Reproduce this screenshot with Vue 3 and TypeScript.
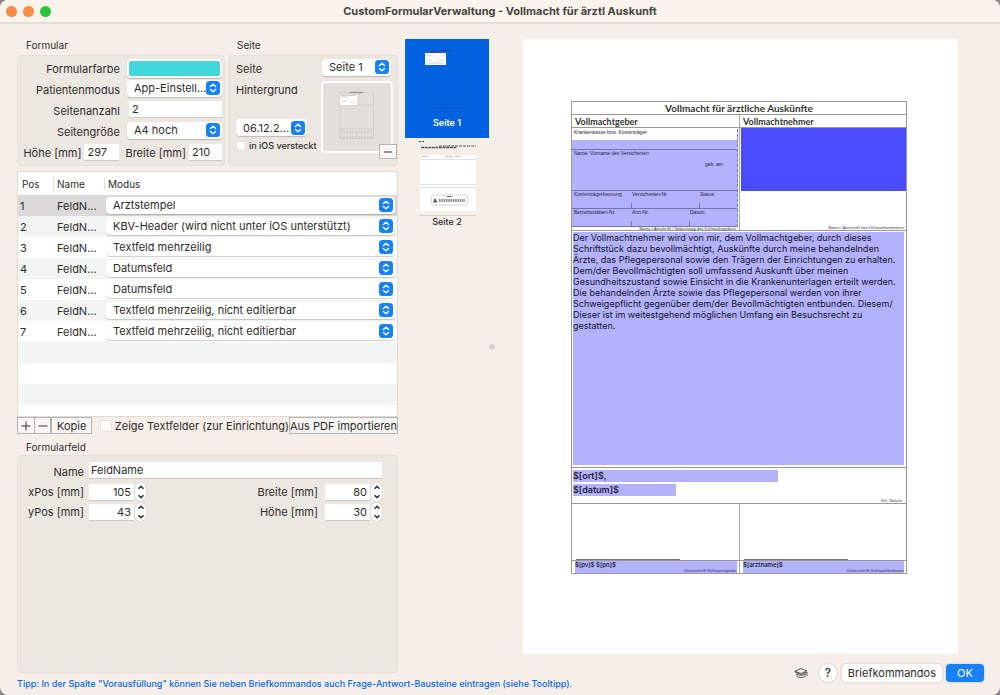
<script setup lang="ts">
import { ref } from 'vue'

interface FormField {
  pos: number
  name: string
  mode: string
}

const modes = [
  'Arztstempel',
  'KBV-Header (wird nicht unter iOS unterstützt)',
  'Textfeld mehrzeilig',
  'Datumsfeld',
  'Textfeld mehrzeilig, nicht editierbar',
]

const fields = ref<FormField[]>(
  [0, 1, 2, 3, 3, 4, 4].map((mode, i) => ({ pos: i + 1, name: 'FeldN...', mode: modes[mode] })),
)
const selected = ref(1)

const patientMode = ref('App-Einstell...')
const pageCount = ref('2')
const pageSize = ref('A4 hoch')
const paperHeight = ref('297')
const paperWidth = ref('210')
const page = ref('Seite 1')
const background = ref('06.12.2...')
const hiddenInIos = ref(false)
const showTextFields = ref(false)

const fieldName = ref('FeldName')
const metrics = ref([
  { id: 'x', label: 'xPos [mm]', value: 105 },
  { id: 'w', label: 'Breite [mm]', value: 80 },
  { id: 'y', label: 'yPos [mm]', value: 43 },
  { id: 'h', label: 'Höhe [mm]', value: 30 },
])

const consentLines = [
  'Der Vollmachtnehmer wird von mir, dem Vollmachtgeber, durch dieses',
  'Schriftstück dazu bevollmächtigt, Auskünfte durch meine behandelnden',
  'Ärzte, das Pflegepersonal sowie den Trägern der Einrichtungen zu erhalten.',
  'Dem/der Bevollmächtigten soll umfassend Auskunft über meinen',
  'Gesundheitszustand sowie Einsicht in die Krankenunterlagen erteilt werden.',
  'Die behandelnden Ärzte sowie das Pflegepersonal werden von ihrer',
  'Schweigepflicht gegenüber dem/der Bevollmächtigten entbunden. Diesem/',
  'Dieser ist im weitestgehend möglichen Umfang ein Besuchsrecht zu',
  'gestatten.',
]
</script>

<template>
  <div class="window">
    <svg class="sprite" aria-hidden="true">
      <symbol id="updown" viewBox="0 0 14 14">
        <rect width="14" height="14" rx="3.5" fill="#1780fb" />
        <path d="M4.4 5.6 7 3.2l2.6 2.4M4.4 8.4 7 10.8l2.6-2.4" fill="none" stroke="#fff" stroke-width="1.3" stroke-linecap="round" stroke-linejoin="round" />
      </symbol>
    </svg>

    <header class="titlebar">
      <div class="lights"><i class="light"></i><i class="light"></i><i class="light zoom"></i></div>
      <h1>CustomFormularVerwaltung - Vollmacht für ärztl Auskunft</h1>
    </header>

    <main class="content">
      <section class="editor">
        <div class="groups">
          <section class="group formular">
            <h2>Formular</h2>
            <div class="box">
              <div class="row">
                <label for="colour">Formularfarbe</label>
                <button id="colour" class="well" type="button" aria-label="Formularfarbe"></button>
              </div>
              <div class="row">
                <label for="pmode">Patientenmodus</label>
                <span class="select">
                  <select id="pmode" v-model="patientMode"><option>App-Einstell...</option></select>
                  <svg><use href="#updown" /></svg>
                </span>
              </div>
              <div class="row">
                <label for="count">Seitenanzahl</label>
                <input id="count" v-model="pageCount" class="text" type="text" />
              </div>
              <div class="row">
                <label for="size">Seitengröße</label>
                <span class="select">
                  <select id="size" v-model="pageSize"><option>A4 hoch</option></select>
                  <svg><use href="#updown" /></svg>
                </span>
              </div>
              <div class="row dims">
                <label for="ph">Höhe [mm]</label>
                <input id="ph" v-model="paperHeight" class="text" type="text" />
                <label for="pw">Breite [mm]</label>
                <input id="pw" v-model="paperWidth" class="text" type="text" />
              </div>
            </div>
          </section>

          <section class="group seite">
            <h2>Seite</h2>
            <div class="box">
              <div class="seite-top">
                <label for="page">Seite</label>
                <span class="select">
                  <select id="page" v-model="page"><option>Seite 1</option><option>Seite 2</option></select>
                  <svg><use href="#updown" /></svg>
                </span>
              </div>
              <div class="seite-main">
                <div class="seite-left">
                  <label for="bg">Hintergrund</label>
                  <span class="select">
                    <select id="bg" v-model="background"><option>06.12.2...</option></select>
                    <svg><use href="#updown" /></svg>
                  </span>
                  <label class="check small"><input v-model="hiddenInIos" type="checkbox" />in iOS versteckt</label>
                </div>
                <div class="preview">
                  <svg viewBox="0 0 68 68" fill="none" aria-hidden="true">
                    <g stroke="#c2beba" stroke-width=".7" stroke-dasharray="2 1">
                      <path d="M17 9.500H50.500V55.500H17zM17 22H50.500M17 46H50.500M17 49H50.500M17 54H50.500M34 49v6" />
                    </g>
                    <path d="M27 9.500h13" stroke="#9c9996" stroke-width="1.500" />
                    <path d="M17 12h17v10H17z" fill="#fff" />
                    <path d="M18 14h8M19 18h5M27 19h5M18 12.500h15" stroke="#bbb" stroke-width=".7" />
                  </svg>
                  <button class="square minus" type="button" aria-label="Hintergrund entfernen"><svg viewBox="0 0 10 10"><path d="M1 5h8" /></svg></button>
                </div>
              </div>
            </div>
          </section>
        </div>

        <div class="tablewrap">
          <table>
            <thead>
              <tr><th class="c-pos">Pos</th><th class="c-name">Name</th><th>Modus</th></tr>
            </thead>
            <tbody>
              <tr v-for="f in fields" :key="f.pos" :class="{ selected: f.pos === selected }" @click="selected = f.pos">
                <td>{{ f.pos }}</td>
                <td>{{ f.name }}</td>
                <td class="c-mode">
                  <span class="select">
                    <select v-model="f.mode" :aria-label="`Modus ${f.pos}`">
                      <option v-for="m in modes" :key="m">{{ m }}</option>
                    </select>
                    <svg><use href="#updown" /></svg>
                  </span>
                </td>
              </tr>
            </tbody>
          </table>
        </div>

        <div class="toolbar">
          <button class="square" type="button" aria-label="Hinzufügen"><svg viewBox="0 0 10 10"><path d="M.5 5h9M5 .5v9" /></svg></button>
          <button class="square" type="button" aria-label="Entfernen"><svg viewBox="0 0 10 10"><path d="M.5 5h9" /></svg></button>
          <button class="square wide" type="button">Kopie</button>
          <label class="check"><input v-model="showTextFields" type="checkbox" />Zeige Textfelder (zur Einrichtung)</label>
          <button class="square import" type="button">Aus PDF importieren</button>
        </div>

        <section class="group field">
          <h2>Formularfeld</h2>
          <div class="box">
            <div class="namerow">
              <label for="fname">Name</label>
              <input id="fname" v-model="fieldName" class="text" type="text" />
            </div>
            <div class="metrics">
              <div v-for="m in metrics" :key="m.id" class="metric">
                <label :for="`m-${m.id}`">{{ m.label }}</label>
                <input :id="`m-${m.id}`" v-model.number="m.value" class="text num" type="text" />
                <span class="stepper">
                  <button type="button" :aria-label="`${m.label} erhöhen`" @click="m.value++"><svg viewBox="0 0 8 5"><path d="M1.500 3.800 4 1.400l2.500 2.400" /></svg></button>
                  <button type="button" :aria-label="`${m.label} verringern`" @click="m.value--"><svg viewBox="0 0 8 5"><path d="M1.500 1.200 4 3.600l2.500-2.400" /></svg></button>
                </span>
              </div>
            </div>
          </div>
        </section>
      </section>

      <nav class="pages">
        <button class="page active" type="button">
          <svg viewBox="0 0 84 78" fill="none" aria-hidden="true">
            <path d="M20.500 11.500h41v58h-41zM20.500 27h41M20.500 58h41M20.500 68.500h41M41 58v10" stroke="#0a56cb" stroke-width=".7" stroke-dasharray="2 1" />
            <path d="M36 11.500h13" stroke="#1b3d78" stroke-dasharray="2 1" />
            <path d="M20 14h21v12H20z" fill="#fff" />
            <path d="M21 16h8M22 21h5M33 21h6M21 24h17" stroke="#b9c4d4" stroke-width=".7" />
            <path d="M25 13h8" stroke="#6a2f66" />
          </svg>
          <span>Seite 1</span>
        </button>
        <button class="page" type="button">
          <svg viewBox="0 0 84 78" fill="none" aria-hidden="true">
            <path d="M15 17h56v56H15z" fill="#fff" />
            <path d="M14 3.500h6" stroke="#444" stroke-dasharray="2 1" />
            <path d="M16 9.500h36" stroke="#555" stroke-width="1.500" stroke-dasharray="3 .6" />
            <path d="M34 8h37" stroke="#555" stroke-dasharray="3 1" />
            <path d="M17 18.500h5M41 18.500h6M50 18.500h4" stroke="#999" stroke-width=".7" />
            <path d="M15 21.500h56M15 46.500h56M15 49.500h56" stroke="#d3dede" stroke-width=".8" />
            <rect x="26" y="57" width="37" height="10" rx="3" fill="#fff" stroke="#d6d6d6" />
            <path d="m28 64.500 2-4.500 2.500 4.500z" fill="#555" />
            <path d="M34 62.500h26" stroke="#888" stroke-width="3" stroke-dasharray="1.500 .8" />
            <path d="M42 58.500h5" stroke="#666" />
            <path d="M14 77.500h57" stroke="#d4cfcb" />
          </svg>
          <span>Seite 2</span>
        </button>
      </nav>

      <section class="viewer">
        <div class="splitter" aria-hidden="true"></div>
        <div class="viewcol">
          <article class="paper">
            <div class="doc">
              <h3>Vollmacht für ärztliche Auskünfte</h3>
              <div class="pair heads"><h4>Vollmachtgeber</h4><h4>Vollmachtnehmer</h4></div>
              <div class="pair parties">
                <div class="giver">
                  <div class="card">
                    <div class="insurer">Krankenkasse bzw. Kostenträger</div>
                    <div class="gap"></div>
                    <div class="person"><span>Name, Vorname des Versicherten</span><span class="born">geb. am</span></div>
                    <div class="codes"><span>Kostenträgerkennung</span><span>Versicherten-Nr.</span><span>Status</span></div>
                    <div class="codes second"><span>Betriebsstätten-Nr.</span><span>Arzt-Nr.</span><span>Datum</span></div>
                  </div>
                  <p class="note">Name / Anschrift / Geburtstag des Vollmachtgebers</p>
                </div>
                <div class="taker">
                  <div class="stamp"></div>
                  <p class="note">Name / Anschrift des Vollmachtnehmers</p>
                </div>
              </div>
              <div class="consent">
                <p><template v-for="(l, i) in consentLines" :key="i">{{ l }}<br /></template></p>
              </div>
              <div class="place">
                <span class="ort">$[ort]$,</span>
                <span class="datum">$[datum]$</span>
                <p class="note">Ort, Datum</p>
              </div>
              <div class="pair signs"><div><hr /></div><div><hr /></div></div>
              <div class="pair names">
                <div><p class="var">$[pv]$ $[pn]$<small>Unterschrift Vollmachtgeber</small></p></div>
                <div><p class="var">$[arztname]$<small>Unterschrift Vollmachtnehmer</small></p></div>
              </div>
            </div>
          </article>
          <footer class="actions">
            <button class="cap" type="button" aria-label="Lernen">
              <svg viewBox="0 0 14 12" fill="none" stroke="#555" stroke-width=".9" stroke-linejoin="round">
                <path d="M7 1.500 13 4 7 6.500 1 4zM3 5v4.500c2 1.400 6 1.400 8 0V5M1 4v1l6 2.500L13 5v4M3 7.200c2 1.600 6 1.600 8 0" />
              </svg>
            </button>
            <button class="help" type="button" aria-label="Hilfe">?</button>
            <button class="push" type="button">Briefkommandos</button>
            <button class="push primary" type="button">OK</button>
          </footer>
        </div>
      </section>

      <p class="tip">Tipp: In der Spalte "Vorausfüllung" können Sie neben Briefkommandos auch Frage-Antwort-Bausteine eintragen (siehe Tooltipp).</p>
    </main>
  </div>
</template>

<style>
body {
  margin: 0;
  background: #8a8688;
}
</style>

<style scoped>
* {
  box-sizing: border-box;
}
.window {
  display: flex;
  flex-direction: column;
  min-height: 100vh;
  overflow: hidden;
  border-radius: 8px;
  background: #f6eee9;
  color: #2f2d2c;
  font: 11px/14px Inter, "Liberation Sans", sans-serif;
}
.sprite {
  position: absolute;
  width: 0;
  height: 0;
}
h1, h2, h3, h4, p {
  margin: 0;
}
button, input, select {
  margin: 0;
  padding: 0;
  border: 0;
  font: inherit;
  color: inherit;
}
label {
  white-space: nowrap;
}

/* title bar */
.titlebar {
  display: grid;
  grid-template-columns: 1fr auto 1fr;
  align-items: center;
  height: 24px;
  padding: 0 6px;
  border-bottom: 2px solid #e3ddd8;
  background: #fdf3ed;
}
.titlebar h1 {
  color: #474443;
  font-size: 11px;
  font-weight: 700;
}
.lights {
  display: flex;
  gap: 6px;
}
.light {
  width: 11px;
  height: 11px;
  border-radius: 50%;
  background: #fd8c45;
}
.light.zoom {
  background: #2ac53f;
}

/* main layout */
.content {
  flex: 1;
  display: grid;
  grid-template-columns: 381px 84px 1fr;
  grid-template-rows: 1fr 22px;
  column-gap: 7px;
  padding: 15px 16px 0 17px;
}
.editor {
  display: flex;
  flex-direction: column;
}
.group {
  display: flex;
  flex-direction: column;
}
.group h2 {
  padding: 0 9px;
  font-size: 10px;
  font-weight: 400;
  line-height: 12px;
}
.box {
  flex: 1;
  border: 1px solid #e6e0da;
  border-radius: 4px;
  background: #ece7e1;
}
.groups {
  display: flex;
  gap: 3px;
}
.groups .group {
  gap: 4px;
}
.groups .box {
  min-height: 110px;
  padding: 2px 2px 2px 0;
}
.groups .seite .box {
  padding: 1px 4px 2px 7px;
}
.formular {
  flex: 0 0 208px;
}
.seite {
  flex: 1;
}
.row {
  display: grid;
  grid-template-columns: 1fr 95px;
  column-gap: 7px;
  align-items: center;
  height: 21px;
}
.row label {
  text-align: right;
}
.row > .select {
  margin-bottom: 3px;
}
.row > #count {
  margin: 0 0 3px 2px;
}
.row.dims {
  grid-template-columns: 1fr 35px auto 33px;
  column-gap: 3px;
}
.row.dims label + .text + label {
  padding: 0 0 0 3px;
}
.text {
  width: auto;
  min-width: 0;
  height: 17px;
  padding: 0 3px;
  border-bottom: 1px solid #cfcac6;
  background: #fff;
}
.well {
  height: 19px;
  border: 2px solid #fff;
  border-radius: 4px;
  background: #42d7da;
  box-shadow: 0 1px 1px #0003;
}
.select {
  display: grid;
  align-items: center;
  height: 17px;
  border-radius: 4px;
  background: #fff;
  box-shadow: 0 1px 1px #0003;
}
.select > * {
  grid-area: 1 / 1;
}
.select select {
  width: 100%;
  height: 17px;
  padding: 0 0 0 7px;
  appearance: none;
  background: transparent;
}
.select svg {
  justify-self: end;
  width: 14px;
  height: 14px;
  margin-right: 2px;
  pointer-events: none;
}
.seite-top {
  display: grid;
  grid-template-columns: 1fr 69px;
  align-items: center;
  height: 24px;
  padding-right: 2px;
}
.seite-top .select {
  margin-bottom: 4px;
}
.seite-main {
  display: grid;
  grid-template-columns: 85px 72px;
}
.seite-left {
  display: flex;
  flex-direction: column;
  height: 72px;
  padding-top: 2px;
}
.seite-left .select {
  width: 71px;
  margin: auto 0 3px;
}
.check {
  display: flex;
  align-items: center;
}
.check input {
  flex: none;
  width: 12px;
  height: 12px;
  margin-right: 3px;
  appearance: none;
  border: 1px solid #e4dfdb;
  border-radius: 3px;
  background: #fff;
}
.check input:checked {
  background: #1780fb;
}
.check.small {
  font-size: 9px;
  font-weight: 500;
}
.check.small input {
  width: 10px;
  height: 10px;
  margin-right: 3px;
}
.preview {
  position: relative;
  height: 72px;
  border: 2px solid #fff;
  border-radius: 4px;
  background: #e3deda;
}
.preview > svg {
  display: block;
  width: 68px;
  height: 68px;
}
.square {
  display: flex;
  align-items: center;
  justify-content: center;
  width: 18px;
  height: 17px;
  border: 1px solid #b7b3b0;
  background: #f8f6f5;
}
.square svg {
  width: 10px;
  height: 10px;
  fill: none;
  stroke: #333;
}
.minus {
  position: absolute;
  right: -6px;
  bottom: -8px;
  height: 15px;
}

/* field table */
.tablewrap {
  height: 246px;
  margin-top: 5px;
  border: 1px solid #e0dbd7;
  background: repeating-linear-gradient(#fff 0 21px, #f3f5f5 21px 42px) 0 23px no-repeat #fff;
}
table {
  width: 100%;
  border-spacing: 0;
  table-layout: fixed;
}
th {
  height: 23px;
  padding: 0 0 0 4px;
  background: #fff;
  font-size: 10px;
  font-weight: 400;
  text-align: left;
}
th + th {
  background: linear-gradient(#e2e2e2, #e2e2e2) 0 6px / 1px 12px no-repeat #fff;
}
.c-pos {
  width: 35px;
}
.c-name {
  width: 51px;
}
td {
  height: 21px;
  padding: 0 0 0 2px;
}
td + td {
  padding-left: 4px;
}
.c-mode {
  padding: 0 2px 1px 2px;
}
.selected td {
  background: #dcdad9;
}
.toolbar {
  display: flex;
  align-items: center;
}
.toolbar .square + .square {
  margin-left: -1px;
}
.toolbar .square + .wide {
  width: 41px;
  margin-left: 0;
}
.toolbar .check {
  margin-left: 8px;
}
.toolbar .import {
  width: 110px;
  margin-left: auto;
  white-space: nowrap;
}

/* field properties */
.field {
  flex: 1;
  gap: 2px;
  margin-top: 7px;
}
.field .box {
  padding: 5px 15px 0 9px;
}
.namerow {
  display: grid;
  grid-template-columns: 57px 1fr;
  column-gap: 5px;
  align-items: center;
  height: 21px;
}
.namerow .text {
  margin-bottom: 2px;
  padding: 0 2px;
}
.namerow label, .metric label {
  text-align: right;
}
.metrics {
  display: grid;
  grid-template-columns: 119px 125px;
  justify-content: space-between;
}
.metric {
  display: grid;
  grid-template-columns: 1fr 45px 12px;
  align-items: center;
  height: 20px;
}
.metric .text {
  margin-top: 1px;
}
.metric label {
  padding-right: 5px;
}
.metric:nth-child(even) label {
  padding-right: 7px;
}
.num {
  text-align: right;
}
.stepper {
  display: flex;
  flex-direction: column;
  height: 18px;
  margin-left: 1px;
  border-radius: 5px;
  background: #fff;
  box-shadow: 0 0 1px #0005;
}
.stepper button {
  display: flex;
  flex: 1;
  align-items: center;
  justify-content: center;
  background: none;
}
.stepper svg {
  width: 8px;
  height: 5px;
  fill: none;
  stroke: #333;
  stroke-width: 1.5;
}

/* page list */
.page {
  display: flex;
  flex-direction: column;
  align-items: center;
  justify-content: flex-start;
  width: 100%;
  height: 99px;
  background: none;
  font-size: 9px;
  font-weight: 500;
  line-height: 12px;
}
.page svg {
  display: block;
  width: 100%;
  height: 78px;
}
.page.active {
  background: #0162e0;
  color: #fff;
}
.page.active span {
  font-weight: 600;
}

/* viewer */
.viewer {
  grid-column: 3;
  grid-row: 1 / 3;
  display: flex;
  align-items: stretch;
  margin-left: -7px;
}
.splitter {
  flex: 0 0 6px;
  align-self: center;
  height: 6px;
  margin: 0 28px 41px 0;
  border-radius: 50%;
  background: #d9d3d0;
}
.viewcol {
  flex: 1;
  display: flex;
  flex-direction: column;
}
.paper {
  flex: 1;
  margin-right: 26px;
  padding: 62px 51px 80px 48px;
  background: #fff;
}
.doc {
  display: flex;
  flex-direction: column;
  height: 100%;
  border: 1px solid #999;
  color: #24233a;
  font-size: 4px;
  line-height: 5px;
}
.doc h3, .doc h4 {
  color: #333;
  font: 700 9px/12px Lato, "Noto Sans", sans-serif;
}
.doc h3 {
  height: 13px;
  border-bottom: 1px solid #999;
  font-size: 10px;
  text-align: center;
}
.pair {
  display: grid;
  grid-template-columns: 1fr 1fr;
}
.pair > * + * {
  border-left: 1px solid #aaa;
}
.heads {
  height: 13px;
  border-bottom: 1px solid #999;
}
.heads h4 {
  padding: 1px 3px 0;
}
.parties {
  height: 103px;
  border-bottom: 1px solid #999;
}
.giver {
  padding: 1px 1px 0 0;
}
.card {
  border-right: 1px dashed #77a;
  border-bottom: 1px solid #77a;
  background: #b3b2fe;
  font-family: "Liberation Sans", sans-serif;
  font-size: 5px;
}
.insurer {
  height: 11px;
  padding: 1px 2px;
  background: #fff;
}
.gap {
  height: 9px;
}
.person {
  display: flex;
  justify-content: space-between;
  height: 41px;
  padding: 1px 14px 0 2px;
  border-top: 1px solid #77a;
}
.born {
  padding-top: 11px;
}
.codes {
  display: grid;
  grid-template-columns: 57px 68px 1fr;
  height: 18px;
  padding: 1px 0 0 2px;
  border-top: 1px solid #77a;
}
.codes span + span {
  background: linear-gradient(#77a, #77a) 0 100% / 1px 5px no-repeat;
  padding-left: 1px;
}
.codes.second {
  grid-template-columns: 57px 58px 1fr;
}
.note {
  padding-right: 2px;
  font-family: "Noto Sans", sans-serif;
  font-size: 4px;
  line-height: 5px;
  text-align: right;
}
.giver .note {
  line-height: 3px;
}
.taker {
  display: flex;
  flex-direction: column;
  justify-content: space-between;
}
.stamp {
  height: 63px;
  margin-left: 1px;
  background: #4b4bff;
}
.consent {
  flex: 1;
  padding: 1px 2px 2px 1px;
  border-bottom: 1px solid #999;
}
.consent p {
  height: 100%;
  background: #b3b2fe;
  color: #14132a;
  font-size: 9px;
  font-weight: 400;
  line-height: 11px;
  white-space: nowrap;
}
.place {
  display: flex;
  flex-direction: column;
  gap: 2px;
  height: 36px;
  padding: 2px 2px 0 1px;
  border-bottom: 1px solid #999;
}
.place span {
  height: 12px;
  background: #b3b2fe;
  font-size: 9px;
  font-weight: 600;
  line-height: 12px;
}
.ort {
  width: 62%;
}
.datum {
  width: 31%;
}
.signs {
  height: 57px;
  border-bottom: 1px solid #999;
}
.signs > div {
  display: flex;
  align-items: flex-end;
  padding-left: 4px;
}
hr {
  width: 104px;
  margin: 0;
  border: 0;
  border-top: 1px solid #777;
}
.names {
  height: 12px;
}
.names > div {
  padding: 0 2px 0 3px;
}
.var {
  display: flex;
  justify-content: space-between;
  height: 12px;
  background: #b3b2fe;
  font-size: 6px;
  font-weight: 600;
  line-height: 8px;
}
.var small {
  align-self: flex-end;
  font: 4px/5px "Noto Sans", sans-serif;
}

/* actions */
.actions {
  display: flex;
  align-items: center;
  justify-content: flex-end;
  gap: 4px;
  height: 41px;
  padding-bottom: 3px;
}
.cap {
  width: 14px;
  height: 12px;
  margin-right: 7px;
  background: none;
}
.cap svg {
  display: block;
  width: 14px;
  height: 12px;
}
.help, .push {
  height: 18px;
  border-radius: 4px;
  background: #fff;
  box-shadow: 0 0 2px #0004;
}
.help {
  width: 18px;
  margin-right: 1px;
  border-radius: 50%;
  font-size: 12px;
  font-weight: 500;
}
.push {
  padding: 0 6px;
}
.push.primary {
  width: 38px;
  background: #1780fb;
  color: #fff;
}
.tip {
  grid-column: 1 / 4;
  grid-row: 2;
  width: max-content;
  align-self: center;
  color: #0a68e4;
  font-size: 9px;
  font-weight: 500;
  line-height: 12px;
  white-space: nowrap;
}
</style>
